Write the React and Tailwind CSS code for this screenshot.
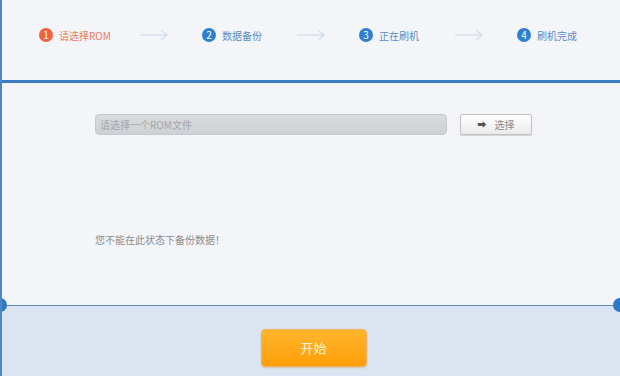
import React from "react";

const steps = [
  { n: 1, label: "请选择ROM", active: true, w: "w-[101px]" },
  { n: 2, label: "数据备份", w: "w-[95px]" },
  { n: 3, label: "正在刷机", w: "w-[96px]" },
  { n: 4, label: "刷机完成", w: "" },
];

const Arrow = () => (
  <svg width="28" height="12" viewBox="0 0 28 12" className="mr-[34px]">
    <path d="M0 6 H27 M21 1 L27 6 L21 11" fill="none" stroke="#d3e1ef" strokeWidth="1.5" />
  </svg>
);

const App = () => {
  return (
    <div
      className="w-[620px] h-[376px] flex flex-col bg-[#f3f5f9] border-l-2 border-[#4a86c8] overflow-hidden"
      style={{ fontFamily: '"Noto Sans CJK SC", "Liberation Sans", sans-serif' }}
    >
      {/* steps */}
      <div className="h-[80px] flex items-start pt-[27px] pl-[37px] text-[10px]">
        {steps.map((s, i) => (
          <React.Fragment key={s.n}>
            <div className={"flex items-center gap-[6px] h-[16px] shrink-0 " + s.w}>
              <span
                className={
                  s.active
                    ? "w-[14px] h-[14px] rounded-full bg-[#f0613f] text-white text-[10px] flex items-center justify-center leading-none"
                    : "w-[14px] h-[14px] rounded-full bg-[#2f7fcf] text-white text-[10px] flex items-center justify-center leading-none"
                }
              >
                {s.n}
              </span>
              <span className={s.active ? "text-[#f07a5a]" : "text-[#5b8cc4]"}>{s.label}</span>
            </div>
            {i < steps.length - 1 && (
              <div className="h-[16px] flex items-center shrink-0">
                <Arrow />
              </div>
            )}
          </React.Fragment>
        ))}
      </div>
      <div className="h-[3px] bg-[#3a7cc2] -ml-[2px]" />

      {/* body */}
      <div className="relative flex-1 flex flex-col pl-[93px] pt-[31px]">
        <div className="flex items-center">
          <div className="w-[352px] h-[21px] shrink-0 rounded-[4px] border border-[#c5c8cd] bg-gradient-to-b from-[#dadcdf] to-[#cdd0d4] flex items-center px-[4px] text-[10px] text-[#a3a5a9]">
            请选择一个ROM文件
          </div>
          <button className="ml-[13px] w-[72px] h-[21px] shrink-0 rounded-[2px] border border-[#c3c3c3] bg-gradient-to-b from-[#ffffff] to-[#ebebeb] shadow-[0_1px_1px_rgba(0,0,0,0.15)] flex items-center justify-center gap-[8px] text-[10px] text-[#8a8a8a]">
            <span className="text-[#555] text-[9px]">➡</span>
            <span>选择</span>
          </button>
        </div>
        <div className="mt-[97px] text-[10px] text-[#8c8c8c]">您不能在此状态下备份数据！</div>

        <span className="absolute left-[-9px] bottom-[-7px] w-[14px] h-[14px] rounded-full bg-[#2e78c6]" />
        <span className="absolute right-[-7px] bottom-[-7px] w-[14px] h-[14px] rounded-full bg-[#2e78c6]" />
      </div>
      <div className="h-[1px] bg-[#5d8cc0]" />

      {/* footer */}
      <div className="h-[70px] bg-[#dbe5f1] flex items-start justify-center pt-[23px]">
        <button className="w-[106px] h-[38px] ml-[5px] rounded-[4px] border border-[#f0b060] bg-gradient-to-b from-[#ffb52a] to-[#ff9e02] text-[#fff4d6] text-[13px] shadow-[0_1px_2px_rgba(200,120,0,0.3)]">
          开始
        </button>
      </div>
    </div>
  );
};

export default App;
